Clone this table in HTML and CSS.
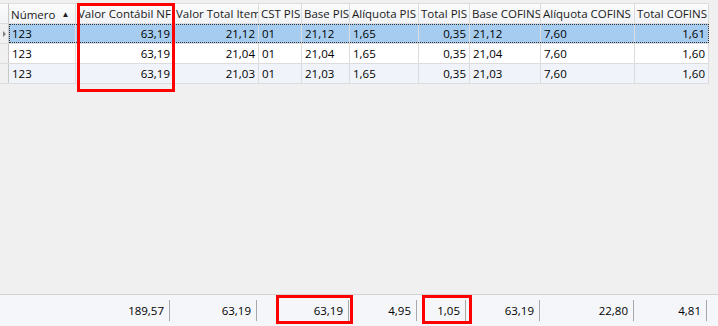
FILE: index.html
```html
<!DOCTYPE html>
<html lang="pt">
<head>
<meta charset="utf-8">
<link rel="stylesheet" href="styles.css">
</head>
<body>
<div class="app">
  <div class="grid">
    <div class="row head">
      <div class="c rh"></div>
      <div class="c">Número <span class="sort">▲</span></div>
      <div class="c">Valor Contábil NF</div>
      <div class="c">Valor Total Item</div>
      <div class="c">CST PIS</div>
      <div class="c">Base PIS</div>
      <div class="c">Alíquota PIS</div>
      <div class="c">Total PIS</div>
      <div class="c">Base COFINS</div>
      <div class="c">Alíquota COFINS</div>
      <div class="c">Total COFINS</div>
    </div>
    <div class="row sel">
      <div class="c rh"><span class="arrow"></span></div>
      <div class="c">123</div>
      <div class="c r">63,19</div>
      <div class="c r">21,12</div>
      <div class="c">01</div>
      <div class="c">21,12</div>
      <div class="c">1,65</div>
      <div class="c r">0,35</div>
      <div class="c">21,12</div>
      <div class="c">7,60</div>
      <div class="c r">1,61</div>
      <div class="focus"></div>
    </div>
    <div class="row">
      <div class="c rh"></div>
      <div class="c">123</div>
      <div class="c r">63,19</div>
      <div class="c r">21,04</div>
      <div class="c">01</div>
      <div class="c">21,04</div>
      <div class="c">1,65</div>
      <div class="c r">0,35</div>
      <div class="c">21,04</div>
      <div class="c">7,60</div>
      <div class="c r">1,60</div>
    </div>
    <div class="row alt">
      <div class="c rh"></div>
      <div class="c">123</div>
      <div class="c r">63,19</div>
      <div class="c r">21,03</div>
      <div class="c">01</div>
      <div class="c">21,03</div>
      <div class="c">1,65</div>
      <div class="c r">0,35</div>
      <div class="c">21,03</div>
      <div class="c">7,60</div>
      <div class="c r">1,60</div>
    </div>
  </div>
  <div class="spacer"></div>
  <div class="footer">
    <div class="f">189,57</div>
    <div class="f">63,19</div>
    <div class="f">63,19</div>
    <div class="f">4,95</div>
    <div class="f">1,05</div>
    <div class="f">63,19</div>
    <div class="f">22,80</div>
    <div class="f">4,81</div>
  </div>
  <div class="mark m1"></div>
  <div class="mark m2"></div>
  <div class="mark m3"></div>
</div>
</body>
</html>
```
FILE: styles.css
```css
* { box-sizing: border-box; }
html, body {
  margin: 0;
  padding: 0;
  background: #f0f0f0;
}
body {
  font-family: "Open Sans", "Noto Sans", sans-serif;
  font-size: 11.5px;
  color: #000;
}
.app {
  position: relative;
  width: 718px;
  height: 326px;
  display: flex;
  flex-direction: column;
}
.grid {
  margin-top: 3px;
  width: 709px;
  border-top: 1px solid #dcdcdc;
}
.row {
  position: relative;
  display: grid;
  grid-template-columns: 9px 67px 98px 85px 43px 48px 69px 51px 71px 94px 74px;
  height: 20px;
  background: #fff;
  border-bottom: 1px solid #dcdcdc;
}
.row.head {
  height: 20px;
  background: linear-gradient(#fbfbfc, #f1f3f6);
  color: #1a1a1a;
}
.row.sel { background: #a6cdf0; }
.row.alt { background: #f0f4fa; }
.c {
  border-right: 1px solid #dcdcdc;
  padding: 0 3px;
  line-height: 19px;
  white-space: nowrap;
  overflow: hidden;
}
.c.r { text-align: right; }
.head .c { padding: 0 2px; }
.c.rh {
  background: #f0f0f0;
  border-right: 1px solid #c8c8c8;
  padding: 0;
  display: flex;
  align-items: center;
  justify-content: center;
}
.head .c.rh { background: linear-gradient(#fbfbfc, #f1f3f6); }
.sort {
  font-size: 8px;
  vertical-align: 2px;
  margin-left: 3px;
}
.arrow {
  width: 0;
  height: 0;
  border-top: 3px solid transparent;
  border-bottom: 3px solid transparent;
  border-left: 3px solid #808080;
}
.focus {
  position: absolute;
  left: 9px;
  top: 0;
  right: 0;
  bottom: 0;
  border: 1px dotted #333;
  pointer-events: none;
}
.spacer { flex: 1; }
.footer {
  height: 32px;
  width: 718px;
  border-top: 1px solid #d4d4d4;
  background: #f4f6f9;
  display: grid;
  grid-template-columns: 170px 87px 92px 68px 49px 74px 94px 73px;
  align-items: center;
}
.f {
  text-align: right;
  padding-right: 5px;
  height: 21px;
  line-height: 21px;
  border-right: 1px solid #a8a8a8;
}
.mark {
  position: absolute;
  border: 3px solid #ff0000;
}
.m1 { left: 77px; top: 3px; width: 98px; height: 89px; }
.m2 { left: 276px; top: 295px; width: 77px; height: 29px; }
.m3 { left: 422px; top: 295px; width: 50px; height: 29px; }
```
